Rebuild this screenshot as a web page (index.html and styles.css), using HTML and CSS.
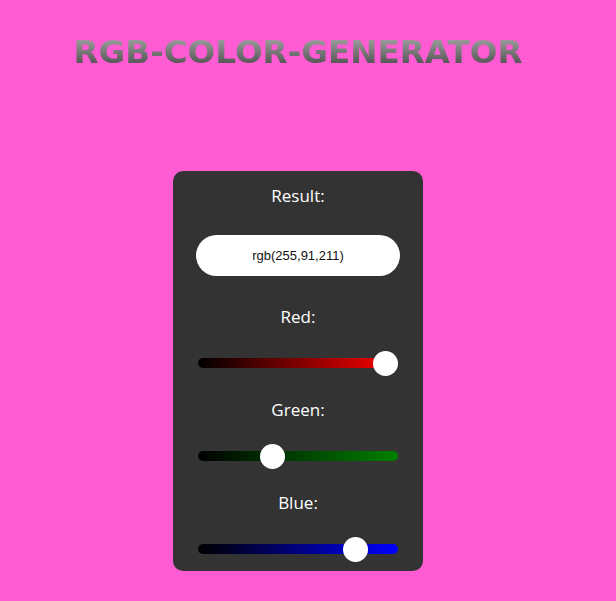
FILE: index.html
```html
<!DOCTYPE html>
<html lang="en">
<head>
<meta charset="utf-8">
<title>RGB-COLOR-GENERATOR</title>
<link rel="stylesheet" href="styles.css">
</head>
<body>
<main class="page">
  <h1 class="title">RGB-COLOR-GENERATOR</h1>
  <section class="card">
    <div class="label">Result:</div>
    <div class="result">rgb(255,91,211)</div>
    <div class="label label-first">Red:</div>
    <input class="slider slider-red" type="range" min="0" max="255" value="255">
    <div class="label">Green:</div>
    <input class="slider slider-green" type="range" min="0" max="255" value="91">
    <div class="label">Blue:</div>
    <input class="slider slider-blue" type="range" min="0" max="255" value="211">
  </section>
</main>
</body>
</html>
```

FILE: styles.css
```css
html, body {
  margin: 0;
  padding: 0;
}
body {
  background: #ff5bd3;
  font-family: "Open Sans", "Noto Sans", sans-serif;
}
.page {
  width: 596px;
  display: flex;
  flex-direction: column;
  align-items: center;
}
.title {
  margin: 32px 0 0 0;
  font-family: "DejaVu Sans", Verdana, sans-serif;
  font-weight: bold;
  font-size: 32.6px;
  line-height: 40px;
  background: linear-gradient(to bottom, #9a9a9a 20%, #555555 80%);
  -webkit-background-clip: text;
  background-clip: text;
  color: transparent;
}
.card {
  margin-top: 99px;
  width: 250px;
  box-sizing: border-box;
  background: #333333;
  border-radius: 10px;
  padding: 13px 0 17px 0;
  display: flex;
  flex-direction: column;
  align-items: center;
}
.label {
  color: #ffffff;
  font-size: 17px;
  line-height: 24px;
  margin-top: 30px;
}
.label:first-child {
  margin-top: 0;
}
.label-first {
  margin-top: 29px;
}
.result {
  margin-top: 27px;
  width: 204px;
  height: 41px;
  border-radius: 21px;
  background: #ffffff;
  color: #111111;
  font-family: "Liberation Sans", Arial, sans-serif;
  font-size: 13px;
  display: flex;
  align-items: center;
  justify-content: center;
}
.slider {
  -webkit-appearance: none;
  appearance: none;
  margin: 29px 0 0 0;
  padding: 0;
  width: 200px;
  height: 10px;
  border-radius: 5px;
  outline: none;
  border: none;
}
.slider-red { background: linear-gradient(to right, #000000, #ff0000); }
.slider-green { background: linear-gradient(to right, #000000, #008000); }
.slider-blue { background: linear-gradient(to right, #000000, #0000ff); }
.slider::-webkit-slider-thumb {
  -webkit-appearance: none;
  appearance: none;
  width: 25px;
  height: 25px;
  border-radius: 50%;
  background: #ffffff;
  border: none;
  cursor: pointer;
}
.slider::-moz-range-thumb {
  width: 25px;
  height: 25px;
  border-radius: 50%;
  background: #ffffff;
  border: none;
}
```
